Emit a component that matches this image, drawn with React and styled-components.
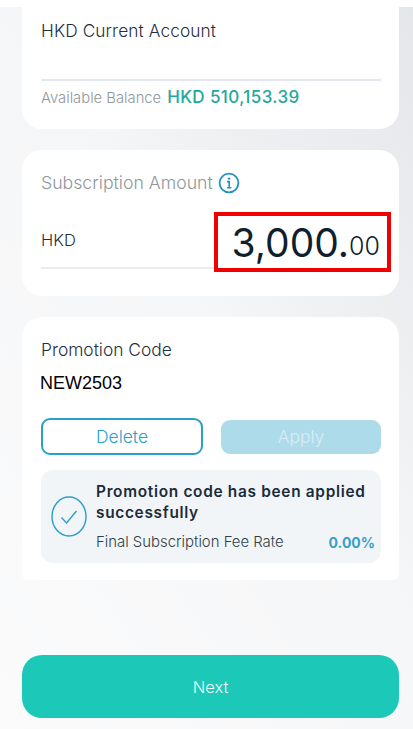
import styled, { createGlobalStyle } from "styled-components"

const GlobalStyle = createGlobalStyle`
    html, body {
        margin: 0;
        padding: 0;
    }
    body {
        font-family: "Inter", "Liberation Sans", sans-serif;
    }
`

const Page = styled.div`
    width: 413px;
    height: 729px;
    overflow: hidden;
    display: flex;
    flex-direction: column;
    background: linear-gradient(55deg, #fbfbfc 0%, #f5f6f7 55%, #eeeff1 72%, #e5e6ea 100%);
`

const TopStrip = styled.div`
    height: 7px;
    flex: none;
    background: #fff;
`

const Content = styled.div`
    display: flex;
    flex-direction: column;
    gap: 21px;
    padding: 0 14px 0 22px;
`

const Card = styled.section`
    background: #fff;
    box-sizing: border-box;
    height: ${(props) => props.height}px;
    padding: ${(props) => props.pad}px 18px 0 19px;
    border-radius: ${(props) => props.radius};
    display: flex;
    flex-direction: column;
`

const AccountName = styled.div`
    font-size: 17.3px;
    font-weight: 300;
    line-height: 20px;
    color: #1f303c;
    letter-spacing: 0.1px;
`

const Rule = styled.div`
    height: 2px;
    margin-top: 38px;
    background: #e4e8ee;
`

const BalanceRow = styled.div`
    display: flex;
    align-items: baseline;
    gap: 6px;
    margin-top: 6px;
`

const BalanceLabel = styled.span`
    font-size: 14.8px;
    font-weight: 300;
    color: #8f979d;
`

const BalanceValue = styled.span`
    font-size: 17px;
    font-weight: 500;
    color: #1fa89c;
    letter-spacing: 0.4px;
`

const AmountTitle = styled.div`
    display: flex;
    align-items: center;
    gap: 5px;
    font-size: 17.7px;
    font-weight: 300;
    line-height: 22px;
    color: #8f979d;
`

const AmountRow = styled.div`
    display: flex;
    margin-top: 18px;
    margin-right: -10px;
`

const CurrencyField = styled.div`
    flex: 1;
    height: 57px;
    box-sizing: border-box;
    border-bottom: 2px solid #e9ecef;
    font-size: 16.5px;
    font-weight: 300;
    color: #1f303c;
    display: flex;
    align-items: center;
`

const Highlight = styled.div`
    width: 177px;
    height: 60px;
    box-sizing: border-box;
    border: 4px solid #f00000;
    display: flex;
    align-items: center;
    justify-content: flex-end;
    padding: 0 7px 0 0;
    color: #0f1f2e;
    font-size: 39px;
    font-weight: 400;
`

const Cents = styled.span`
    font-size: 25px;
    font-weight: 300;
    align-self: flex-end;
    line-height: 43px;
`

const PromoLabel = styled.div`
    font-size: 17.4px;
    font-weight: 300;
    line-height: 20px;
    color: #1f303c;
`

const PromoValue = styled.div`
    font-family: "Liberation Sans", Arial, sans-serif;
    font-size: 18px;
    line-height: 22px;
    color: #000;
    margin-top: 12px;
    margin-left: -1px;
`

const ButtonRow = styled.div`
    display: grid;
    grid-template-columns: 162px 160px;
    justify-content: space-between;
    align-items: center;
    margin-top: 24px;
`

const ActionButton = styled.button`
    box-sizing: border-box;
    height: ${(props) => (props.filled ? 34 : 37)}px;
    border-radius: 9px;
    border: ${(props) => (props.filled ? "none" : "2px solid #2a9fc9")};
    background: ${(props) => (props.filled ? "#aedbe9" : "#fff")};
    color: ${(props) => (props.filled ? "#d6eef5" : "#2a9fc9")};
    font-family: inherit;
    font-size: 17.5px;
    font-weight: 300;
    padding: 0;
`

const Notice = styled.div`
    margin-top: 15px;
    height: 93px;
    box-sizing: border-box;
    border-radius: 12px;
    background: #f1f5f8;
    display: flex;
    align-items: center;
    padding: 0 6px 0 10px;
    gap: 9px;
`

const NoticeBody = styled.div`
    flex: 1;
    display: flex;
    flex-direction: column;
    margin-top: -1px;
`

const NoticeTitle = styled.div`
    font-size: 15.4px;
    font-weight: 600;
    line-height: 21px;
    letter-spacing: 0.7px;
    color: #1c2b38;
`

const FeeRow = styled.div`
    display: flex;
    justify-content: space-between;
    align-items: center;
    margin-top: 10px;
    font-size: 14.9px;
    font-weight: 300;
    color: #2f3e49;
`

const FeeValue = styled.span`
    font-size: 14px;
    font-weight: 700;
    color: #3a9fc4;
`

const Footer = styled.div`
    margin-top: auto;
    padding: 0 14px 11px 22px;
`

const NextButton = styled.button`
    width: 100%;
    height: 63px;
    border: none;
    border-radius: 20px;
    background: #1cc8b8;
    color: #f0fbfa;
    font-family: inherit;
    font-size: 16.5px;
    font-weight: 300;
    padding: 0;
`

const InfoIcon = () => (
    <svg width="22" height="22" viewBox="0 0 22 22" fill="none" stroke="#1f93c4">
        <circle cx="11" cy="11" r="9.4" strokeWidth="1.8" />
        <circle cx="11" cy="6.6" r="1.2" fill="#1f93c4" stroke="none" />
        <path d="M9 9.6h2.2v6M9 15.8h4.4" strokeWidth="1.6" />
    </svg>
)

const CheckIcon = () => (
    <svg width="36" height="41" viewBox="0 0 36 41" fill="none" stroke="#2a9fc9" style={{ flex: "none" }}>
        <ellipse cx="18" cy="20.5" rx="17" ry="19.5" strokeWidth="1.4" />
        <path d="M10.5 21.5l5 5.5 10-12" strokeWidth="1.4" />
    </svg>
)

const App = () => {
    return (
        <Page>
            <GlobalStyle />
            <TopStrip />
            <Content>
                <Card height={122} pad={14} radius="0 0 20px 20px">
                    <AccountName>HKD Current Account</AccountName>
                    <Rule />
                    <BalanceRow>
                        <BalanceLabel>Available Balance</BalanceLabel>
                        <BalanceValue>HKD 510,153.39</BalanceValue>
                    </BalanceRow>
                </Card>
                <Card height={146} pad={22} radius="20px">
                    <AmountTitle>
                        Subscription Amount
                        <InfoIcon />
                    </AmountTitle>
                    <AmountRow>
                        <CurrencyField>HKD</CurrencyField>
                        <Highlight>
                            3,000.<Cents>00</Cents>
                        </Highlight>
                    </AmountRow>
                </Card>
                <Card height={263} pad={23} radius="20px 20px 6px 6px">
                    <PromoLabel>Promotion Code</PromoLabel>
                    <PromoValue>NEW2503</PromoValue>
                    <ButtonRow>
                        <ActionButton>Delete</ActionButton>
                        <ActionButton filled>Apply</ActionButton>
                    </ButtonRow>
                    <Notice>
                        <CheckIcon />
                        <NoticeBody>
                            <NoticeTitle>Promotion code has been applied successfully</NoticeTitle>
                            <FeeRow>
                                Final Subscription Fee Rate
                                <FeeValue>0.00%</FeeValue>
                            </FeeRow>
                        </NoticeBody>
                    </Notice>
                </Card>
            </Content>
            <Footer>
                <NextButton>Next</NextButton>
            </Footer>
        </Page>
    )
}

export default App
